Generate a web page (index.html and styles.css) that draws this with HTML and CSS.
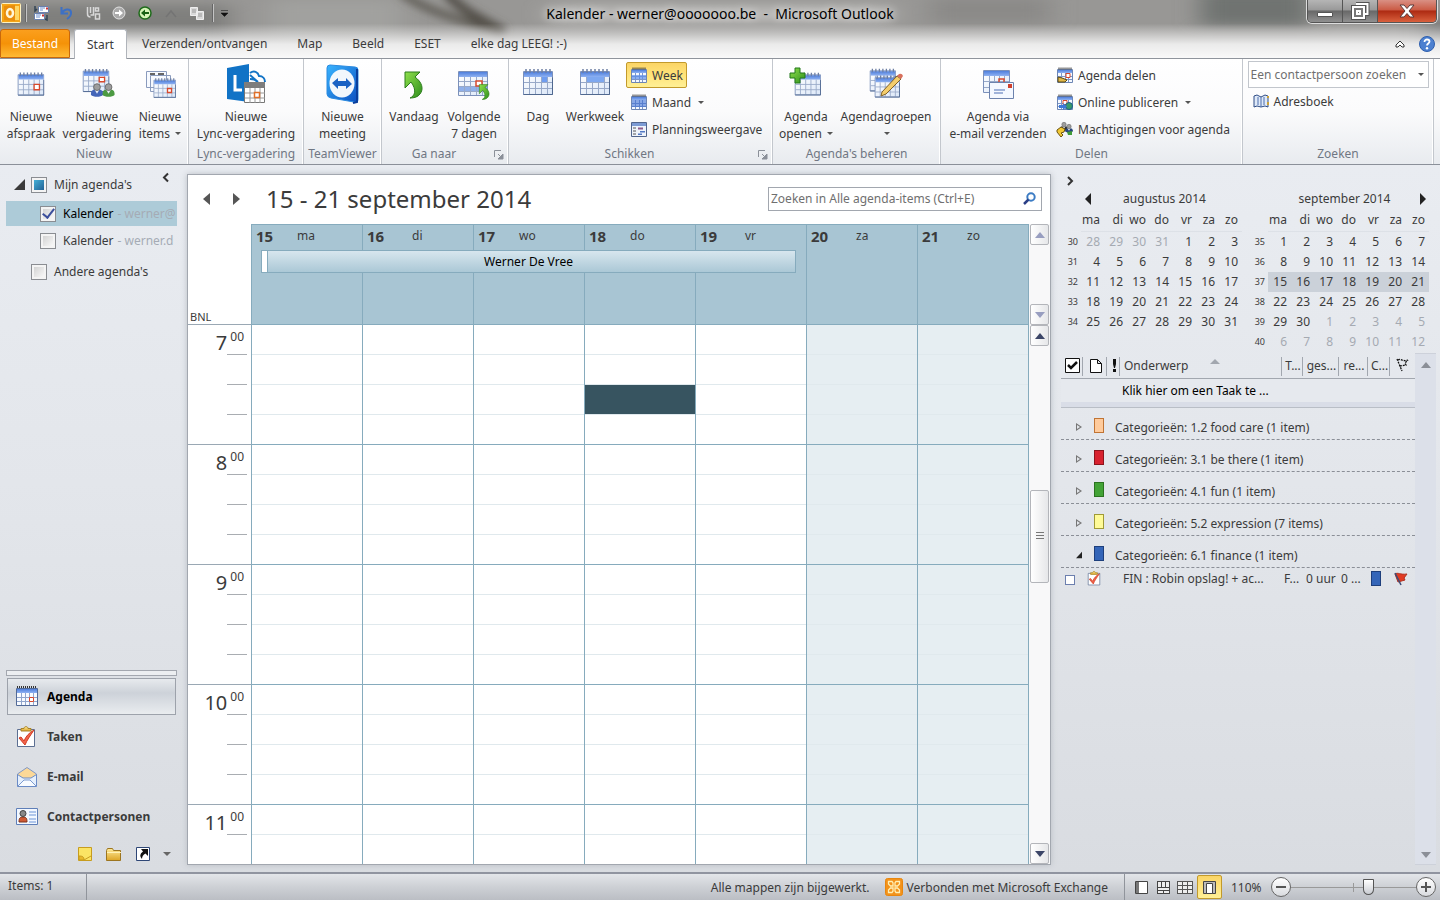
FILE: index.html
```html
<!DOCTYPE html>
<html lang="nl">
<head>
<meta charset="utf-8">
<title>Kalender - Microsoft Outlook</title>
<link rel="stylesheet" href="styles.css">
</head>
<body>
<svg class="defs" aria-hidden="true">
  <defs>
    <linearGradient id="gBlue" x2="0" y2="1"><stop offset="0" stop-color="#4f7fdc"/><stop offset="1" stop-color="#8fb2f2"/></linearGradient>
    <linearGradient id="gPaper" x2="1" y2="1"><stop offset="0" stop-color="#fff"/><stop offset="1" stop-color="#dbe7f8"/></linearGradient>
    <linearGradient id="gGreen" x2="1" y2="1"><stop offset="0" stop-color="#8fe04c"/><stop offset="1" stop-color="#2f8f1c"/></linearGradient>
    <linearGradient id="gTv" x2="1" y2="1"><stop offset="0" stop-color="#39b4ff"/><stop offset="1" stop-color="#0a4fc0"/></linearGradient>
    <linearGradient id="gGold" x2="0" y2="1"><stop offset="0" stop-color="#ffeb9a"/><stop offset="1" stop-color="#dda526"/></linearGradient>
  </defs>
  <symbol id="cal" viewBox="0 0 32 32">
    <path d="M2.500 5.500h29v23h-29z" fill="url(#gPaper)" stroke="#7b90ba"/>
    <path d="M3 6h28v5H3z" fill="url(#gBlue)"/>
    <path d="M3 16.500h28M3 22.500h28M8.500 11v17M14.500 11v17M20.500 11v17M26.500 11v17" stroke="#98a9c8" fill="none"/>
    <path d="M2.500 28.500h29v-17" stroke="#50688f" fill="none"/>
    <path d="M5 3v4M9 3v4M13 3v4M17 3v4M21 3v4M25 3v4M29 3v4" stroke="#6d7fa4" stroke-width="1.500"/>
  </symbol>
  <symbol id="cal16" viewBox="0 0 16 16">
    <path d="M.5 2.500h15v13H.5z" fill="#f5f9ff" stroke="#6d86b4"/>
    <path d="M1 3h14v3H1z" fill="url(#gBlue)"/>
    <path d="M1 9.500h14M1 12.500h14M4.500 6v9M8.500 6v9M11.500 6v9" stroke="#7d97c8" fill="none"/>
    <path d="M2 .5v2M4 .5v2M6 .5v2M8 .5v2M10 .5v2M12 .5v2M14 .5v2" stroke="#333"/>
  </symbol>
  <symbol id="curl" viewBox="0 0 20 28">
    <path d="M1 1h15l-5 5c7 5 9 12 5 17-2 3-6 4-10 4 5-2 7-8 1-16l-6 6z" fill="url(#gGreen)" stroke="#2c7d1c"/>
  </symbol>
  <symbol id="task" viewBox="0 0 20 22">
    <path d="M1.500 3.500h17v17h-17z" fill="#fff" stroke="#5c6f92"/>
    <path d="M5 5V2.500h3C8 0 12 0 12 2.500h3V5z" fill="url(#gGold)" stroke="#a7822a"/>
    <path d="M3 12l2-1 3 4c2-5 5-8 10-11-4 6-7 10-9 15z" fill="#f0644c" stroke="#d23a22"/>
  </symbol>
  <symbol id="person" viewBox="0 0 14 16">
    <path d="M0 13c0-4 2-6 7-6s7 2 7 6c-3 3-11 3-14 0z"/>
    <path d="M4 7h6l-3 5z" fill="#e8eef8"/>
    <circle cx="7" cy="4.500" r="3.800" fill="#9d9d9d" stroke="#666"/>
  </symbol>
  <symbol id="launch" viewBox="0 0 10 10">
    <path d="M.5 7V.5H7" fill="none" stroke="#8b9099"/><path d="M4 4l4 4M9 4v5H4z" fill="#8b9099" stroke="#8b9099"/>
  </symbol>
  <symbol id="exch" viewBox="0 0 18 18">
    <rect x=".5" y=".5" width="17" height="17" rx="2" fill="#f3921a" stroke="#e8860e"/>
    <path d="M3.500 3.500h3.500l1 1.500v3H5.500l-2-2zM14.500 3.500H11L10 5v3h2.500l2-2zM3.500 14.500h3.500l1-1.500v-3H5.500l-2 2zM14.500 14.500H11L10 13v-3h2.500l2 2z" fill="none" stroke="#fff0b4" stroke-width="1.300"/>
  </symbol>
</svg>

<div class="window">
  <header class="chrome">
    <svg class="backdrop" viewBox="0 0 1440 58" preserveAspectRatio="none" aria-hidden="true">
      <defs>
        <filter id="soft" filterUnits="userSpaceOnUse" x="-60" y="-60" width="1560" height="180"><feGaussianBlur stdDeviation="12 6"/></filter>
        <filter id="twig" filterUnits="userSpaceOnUse" x="380" y="-40" width="180" height="120"><feGaussianBlur stdDeviation="4"/></filter>
        <linearGradient id="fade" x2="0" y2="1"><stop offset=".4" stop-color="#fafafa" stop-opacity="0"/><stop offset=".75" stop-color="#f6f6f6" stop-opacity=".88"/><stop offset="1" stop-color="#fafafa"/></linearGradient>
      </defs>
      <rect width="1440" height="58" fill="#989795"/>
      <g filter="url(#soft)" fill="none">
        <path d="M-20 22h250" stroke="#7f7f7d" stroke-width="34"/>
        <path d="M270 20h130" stroke="#a1a19f" stroke-width="40"/>
        <path d="M550 14h340" stroke="#bcbbb9" stroke-width="16"/>
        <path d="M930 10h120" stroke="#8b8a88" stroke-width="26"/>
        <path d="M1200 8h110" stroke="#707371" stroke-width="34"/>
        <path d="M1425 36h40" stroke="#777" stroke-width="34"/>
      </g>
      <g filter="url(#twig)" fill="none">
        <path d="M445-8c20 22 40 28 60 40" stroke="#4f4c45" stroke-width="9"/>
        <path d="M400-8c30 22 60 26 100 40" stroke="#5a5750" stroke-width="7"/>
      </g>
      <rect width="1440" height="58" fill="url(#fade)"/>
    </svg>
    <div class="titlebar">
      <div class="quick">
        <svg width="20" height="20" viewBox="0 0 20 20"><rect x=".5" y=".5" width="19" height="19" rx="1" fill="#f5a517" stroke="#fff2c0"/><path d="M12 3h6v14h-6z" fill="#ffd765"/><path d="M3 3l11-1v16L3 17z" fill="#e98d0c"/><ellipse cx="9" cy="10" rx="3" ry="4" fill="none" stroke="#fff6d8" stroke-width="2.500"/></svg>
        <i class="sep"></i>
        <button class="qb" aria-label="Verzenden/ontvangen"><svg width="17" height="17" viewBox="0 0 17 17"><path d="M5.500 1.500h10v6h-10zM1.500 8.500h10v6h-10z" fill="#fff" stroke="#6a80ac"/><path d="M7 3h5M7 5h3M3 10h5M3 12h4" stroke="#6a8fd0"/><path d="M13 2.500h2v2h-2zM9 9.500h2v2H9z" fill="#c33"/><path d="M2 1v5l2-2M14 10v5l-2-1" fill="none" stroke="#345" stroke-width="1.500"/></svg></button>
        <button class="qb" aria-label="Ongedaan maken"><svg width="14" height="14" viewBox="0 0 14 14"><path d="M1.500 1v6.500H8M2 7c2-4 8-5 9-1 .5 3-1 5-4 7" fill="none" stroke="#3d70c4" stroke-width="2"/></svg></button>
        <button class="qb" aria-label="Afdrukken"><svg width="15" height="15" viewBox="0 0 15 15" fill="none" stroke="#d8d8d8"><path d="M1.500 1v7q0 3 3 3M4.500 1v6M7.500 1v8h-3M9.500 2h3v3h-3zM9.500 8h4v5h-4z" stroke-width="1.500"/></svg></button>
        <button class="qb" aria-label="Vooruit"><svg width="14" height="14" viewBox="0 0 14 14"><circle cx="7" cy="7" r="6" fill="#aaa" stroke="#e2e2e2"/><path d="M3 6h4V3.500L11 7l-4 3.500V8H3z" fill="#fff"/></svg></button>
        <button class="qb" aria-label="Terug"><svg width="14" height="14" viewBox="0 0 14 14"><circle cx="7" cy="7" r="6" fill="#d6f5b8" stroke="#1f6b1b" stroke-width="1.500"/><path d="M11 6H7V3.500L3 7l4 3.500V8h4z" fill="#186014"/></svg></button>
        <button class="qb" aria-label="Omhoog"><svg width="12" height="9" viewBox="0 0 12 9"><path d="M1 8l5-6 5 6" fill="none" stroke="#747474" stroke-width="1.500"/></svg></button>
        <button class="qb" aria-label="Kopiëren"><svg width="14" height="13" viewBox="0 0 14 13"><path d="M.5.5h7v8h-7zM6.500 4.500h7v8h-7z" fill="#d9d9d9" stroke="#eee"/><path d="M2 3h4M2 5h4M8 7h4M8 9h4" stroke="#999"/></svg></button>
        <i class="sep"></i>
        <button class="qb qb-more" aria-label="Meer"><svg width="7" height="7" viewBox="0 0 7 7"><path d="M0 .5h7M0 3h7L3.500 6.500z" fill="#111" stroke="#111" stroke-width=".5"/></svg></button>
      </div>
      <h1 class="wintitle">Kalender - werner@ooooooo.be&nbsp; -&nbsp; Microsoft Outlook</h1>
      <div class="winbtns">
        <button class="wb" aria-label="Minimaliseren"><svg width="18" height="14" viewBox="0 0 18 14"><path d="M1.500 8.500h15v4h-15z" fill="#fff" stroke="#555"/></svg></button>
        <button class="wb" aria-label="Verkleinen"><svg width="18" height="18" viewBox="0 0 18 18"><path d="M5 1.500h12v11h-3M1.500 4.500h12v12h-12z" fill="#777" stroke="#555" stroke-width="3"/><path d="M5 2h11.500v10H14M2 5h11v11H2zM6 9h3v3H6z" fill="none" stroke="#fff" stroke-width="2"/></svg></button>
        <button class="wb wb-close" aria-label="Sluiten"><svg width="16" height="14" viewBox="0 0 16 14"><path d="M1 1h4l3 3.500L11 1h4l-5 6 5 6h-4L8 9.500 5 13H1l5-6z" fill="#fff" stroke="#5a3a3a"/></svg></button>
      </div>
    </div>
    <nav class="tabs">
      <button class="tab tab-file">Bestand</button>
      <button class="tab tab-on">Start</button>
      <button class="tab">Verzenden/ontvangen</button>
      <button class="tab">Map</button>
      <button class="tab">Beeld</button>
      <button class="tab">ESET</button>
      <button class="tab">elke dag LEEG! :-)</button>
      <div class="tabend">
        <svg width="10" height="8" viewBox="0 0 10 8"><path d="M1 5l4-4 4 4v2H7L5 5 3 7H1z" fill="#fff" stroke="#333"/></svg>
        <svg width="16" height="16" viewBox="0 0 16 16"><circle cx="8" cy="8" r="7.500" fill="#4c80d0" stroke="#2e5fae"/><path d="M5.500 6c0-3.500 5-3 5-.4 0 1.900-2.500 2-2.500 4" fill="none" stroke="#fff" stroke-width="1.800"/><circle cx="8" cy="12.200" r="1.200" fill="#fff"/></svg>
      </div>
    </nav>
  </header>

  <section class="ribbon">
    <div class="group g-nieuw">
      <div class="tools">
        <button class="big w62"><svg class="ic" viewBox="-1 -2 36 36"><use href="#cal" width="32" height="32"/><path d="M20.500 16.500h6v6h-6z" fill="#fff" stroke="#d8492c" stroke-width="1.500"/></svg><span>Nieuwe<br>afspraak</span></button>
        <button class="big w70"><svg class="ic" viewBox="0 2 36 36"><use href="#cal" width="32" height="32"/><path d="M20.500 12.500h6v5h-6z" fill="#fff" stroke="#d8492c" stroke-width="1.500"/><use href="#person" x="11" y="19" width="14" height="16" fill="#4465b8"/><use href="#person" x="24" y="19" width="14" height="16" fill="#4c9a42"/></svg><span>Nieuwe<br>vergadering</span></button>
        <button class="big w56"><svg class="ic" viewBox="0 0 32 32"><path d="M2.500 3.500h20v16h-20zM6.500 7.500h20v16h-20z" fill="#f7faff" stroke="#8a9bbd"/><path d="M6 6h5M14 6h6" stroke="#666" stroke-width="2"/><use href="#cal" x="8" y="8" width="24" height="24"/><path d="M23.500 20.500h4v4h-4z" fill="#fff" stroke="#d8492c" stroke-width="1.300"/></svg><span>Nieuwe<br>items <i class="dn"></i></span></button>
      </div>
      <div class="glabel">Nieuw</div>
    </div>
    <div class="group g-lync">
      <div class="tools">
        <button class="big w108"><svg class="ic ic40" viewBox="0 0 40 40"><path d="M1 4l22-4v38L1 35z" fill="#1173c6"/><path d="M9 11v15h7" fill="none" stroke="#fff" stroke-width="3"/><path d="M24 9c4-3 8-1 9 3 4 0 6 3 6 6M24 15c3 0 6 1 7 3M24 11l8 7" fill="none" stroke="#1173c6" stroke-width="2"/><path d="M18.500 18.500h20v20h-20z" fill="#fff" stroke="#777"/><path d="M18 18h21v6H18z" fill="#7d7d7d"/><path d="M19 29h20M19 34h20M24 24v15M29 24v15M34 24v15" stroke="#999"/><path d="M28.500 28.500h5v5h-5z" fill="#fff" stroke="#e0702a" stroke-width="1.500"/></svg><span>Nieuwe<br>Lync-vergadering</span></button>
      </div>
      <div class="glabel">Lync-vergadering</div>
    </div>
    <div class="group g-tv">
      <div class="tools">
        <button class="big w70"><svg class="ic ic40" viewBox="0 0 40 40"><path d="M4 4q0-3 3-3l25 2q3 0 3 3v29q0 4-4 3L8 34q-4-1-4-4z" fill="url(#gTv)" stroke="#2b8be0"/><path d="M34 5v33l-4 1" fill="none" stroke="#0a3f9c" stroke-width="2"/><ellipse cx="19" cy="19.500" rx="12.500" ry="14" fill="#f2f7fc"/><path d="M9 19l6-5v3h8v-3l6 6-6 5v-3h-8v3z" fill="#1a62c4"/></svg><span>Nieuwe<br>meeting</span></button>
      </div>
      <div class="glabel">TeamViewer</div>
    </div>
    <div class="group g-ga">
      <div class="tools">
        <button class="big w60"><svg class="ic"><use href="#curl" x="6" y="3" width="20" height="28"/></svg><span>Vandaag</span></button>
        <button class="big w60"><svg class="ic" viewBox="0 0 32 32"><path d="M.5 3.500h29v24H.5z" fill="url(#gPaper)" stroke="#7b90ba"/><path d="M1 4h28v5H1z" fill="url(#gBlue)"/><path d="M1 18h28v5H1z" fill="#8fb0ea"/><path d="M1 13.500h28M1 18.500h28M1 23.500h28M6.500 9v18M12.500 9v18M18.500 9v18M24.500 9v18" stroke="#98a9c8"/><path d="M18 13h6v5h-6z" fill="#fff" stroke="#d8492c" stroke-width="1.500"/><use href="#curl" x="20" y="16" width="13" height="16"/></svg><span>Volgende<br>7 dagen</span></button>
      </div>
      <div class="glabel glabel-l">Ga naar<svg class="launch"><use href="#launch"/></svg></div>
    </div>
    <div class="group g-schik">
      <div class="tools">
        <button class="big w52"><svg class="ic" viewBox="1 2 32 32"><use href="#cal" width="32" height="32"/><path d="M21 11h5v5h-5z" fill="#6f9df0"/></svg><span>Dag</span></button>
        <button class="big w62"><svg class="ic" viewBox="1 2 32 32"><use href="#cal" width="32" height="32"/><path d="M9 11h17v5H9z" fill="#7ea8f0"/></svg><span>Werkweek</span></button>
        <div class="stack">
          <button class="small small-on"><svg class="ic16"><use href="#cal16"/><path d="M1 8h14v4H1z" fill="#5f90ea" opacity=".7"/></svg>Week</button>
          <button class="small"><svg class="ic16"><use href="#cal16"/><path d="M1 6h14v7H1z" fill="#3f70d4" opacity=".6"/></svg>Maand <i class="dn"></i></button>
          <button class="small"><svg class="ic16"><path d="M.5 1.500h15v14H.5z" fill="#eef3fb" stroke="#51658c"/><path d="M1 2h14v3H1z" fill="#7c9bd4"/><path d="M2 7h3M2 10h3M2 13h3" stroke="#555"/><path d="M7 6.500h5v2H7z" fill="#8d5a8a"/><path d="M9 10h5v1.500H9zM7 12.500h4V14H7z" fill="#5279c4"/></svg>Planningsweergave</button>
        </div>
      </div>
      <div class="glabel glabel-l">Schikken<svg class="launch"><use href="#launch"/></svg></div>
    </div>
    <div class="group g-beheer">
      <div class="tools">
        <button class="big w62"><svg class="ic" viewBox="0 0 32 32"><use href="#cal" x="3" y="2" width="28" height="28"/><path d="M5 0h5v5h5v5h-5v5H5v-5H0V5h5z" fill="url(#gGreen)" stroke="#23791a"/></svg><span>Agenda<br>openen <i class="dn"></i></span></button>
        <button class="big w98"><svg class="ic" viewBox="0 0 32 32"><use href="#cal" x="-2" y="-2" width="28" height="28"/><use href="#cal" x="3" y="5" width="27" height="27"/><path d="M11 28l1-4L27 8l4 3-15 15z" fill="#f4cd6c" stroke="#80622a"/><path d="M27 8l2-2q3-1 4 2l-2 3z" fill="#d8705c"/></svg><span>Agendagroepen<br><i class="dn"></i></span></button>
      </div>
      <div class="glabel">Agenda's beheren</div>
    </div>
    <div class="group g-delen">
      <div class="tools">
        <button class="big w108"><svg class="ic" viewBox="0 0 32 32"><path d="M1.500 2.500h26v22h-26z" fill="url(#gPaper)" stroke="#7b90ba"/><path d="M2 3h25v5H2z" fill="url(#gBlue)"/><path d="M2 13.500h25M2 19.500h25M7.500 8v16M12.500 8v16M17.500 8v16M22.500 8v16" stroke="#98a9c8"/><path d="M17 14v-3h5v3" fill="none" stroke="#d8492c" stroke-width="1.500"/><path d="M7.500 14.500h24v16h-24z" fill="#f4f8ff" stroke="#6c82ad"/><path d="M12 22h11M12 25h9" stroke="#4d6fb4"/><path d="M26 16h4v4h-4z" fill="#d0402c"/></svg><span>Agenda via<br>e-mail verzenden</span></button>
        <div class="stack">
          <button class="small"><svg class="ic16"><use href="#cal16"/><path d="M9 6.500h4v4H9z" fill="#fff" stroke="#d8492c"/><path d="M1 10l4 1 5 2-2 2H1z" fill="#e0b748" stroke="#5c4a12"/></svg>Agenda delen</button>
          <button class="small"><svg class="ic16"><use href="#cal16"/><path d="M6 6.500h4v4H6z" fill="#fff" stroke="#d8492c"/><circle cx="12" cy="12" r="3.500" fill="#3a9a6a" stroke="#1b5f8c"/><path d="M2 11h4V9l4 3.500L6 16v-2H2z" fill="#3c78d8"/></svg>Online publiceren <i class="dn"></i></button>
          <button class="small"><svg class="ic16" viewBox="0 0 16 16"><use href="#person" x="3" y="0" width="8" height="11" fill="#333"/><use href="#person" x="8" y="1" width="8" height="13" fill="#27447c"/><path d="M10 11l5-1v4h-4z" fill="#3f9a38"/><path d="M0 9l4-3 4 2-1 3-3 1 2 2-2 2-4-5z" fill="#f2c834" stroke="#6b5310"/></svg>Machtigingen voor agenda</button>
        </div>
      </div>
      <div class="glabel">Delen</div>
    </div>
    <div class="group g-zoek">
      <div class="tools">
        <div class="find">
          <label class="combo"><input class="combo-in" type="text" placeholder="Een contactpersoon zoeken" aria-label="Een contactpersoon zoeken"><i class="dn"></i></label>
          <button class="small"><svg class="ic16" viewBox="0 0 16 16"><path d="M1 3l3-1 4 2 4-2 3 1v11l-3-1-4 1-4-1-3 1z" fill="#dfe9f8" stroke="#2f4d86"/><path d="M8 4v10M5 4v8M11 4v8" stroke="#4c6fae"/><path d="M14 3h2v2h-2zM14 9h2v3h-2z" fill="#caa23a"/></svg>Adresboek</button>
        </div>
      </div>
      <div class="glabel">Zoeken</div>
    </div>
  </section>

  <main class="work">
    <aside class="side">
      <div class="tree">
        <div class="row row-top"><i class="open"></i><i class="box box-mixed"></i>Mijn agenda's<svg class="collapse" width="7" height="9" viewBox="0 0 7 9"><path d="M6 .5l-4 4 4 4" fill="none" stroke="#333" stroke-width="2"/></svg></div>
        <label class="row row-sub row-on"><input class="box" type="checkbox" checked>Kalender<span class="dim">- werner@</span></label>
        <label class="row row-sub"><input class="box" type="checkbox">Kalender<span class="dim">- werner.d</span></label>
        <label class="row row-other"><input class="box" type="checkbox">Andere agenda's</label>
      </div>
      <div class="modules">
        <div class="splitter"></div>
        <button class="mod mod-on"><svg width="24" height="22" viewBox="0 0 24 22"><path d="M1.500 2.500h21v17h-21z" fill="#f8fbff" stroke="#526a97"/><path d="M2 3h20v4H2z" fill="url(#gBlue)"/><path d="M2 11.500h20M2 15.500h20M6.500 7v12M10.500 7v12M14.500 7v12M18.500 7v12" stroke="#90a5cc"/><path d="M2 1h20" stroke="#333" stroke-width="2" stroke-dasharray="1 1"/><path d="M14.500 11.500h4v4h-4z" fill="#fff" stroke="#d8492c"/></svg>Agenda</button>
        <button class="mod"><svg width="24" height="22"><use href="#task" x="1" width="20" height="22"/></svg>Taken</button>
        <button class="mod"><svg width="24" height="22" viewBox="0 0 24 22"><path d="M2.500 8L12 1.500 21.500 8v12h-19z" fill="#fbd898" stroke="#7f98c8"/><path d="M2.500 8.500L8 12h8l5.500-3.500v12h-19z" fill="#e6f0fd" stroke="#6a8bc6"/><path d="M3 20l6-6h6l6 6" fill="#f8fbff" stroke="#7c9bd0"/></svg>E-mail</button>
        <button class="mod"><svg width="24" height="20" viewBox="0 0 24 20"><path d="M1.500 1.500h21v16h-21z" fill="#f3f8ff" stroke="#5f7fb8"/><path d="M4 15c0-4 1-5 4-5s4 1 4 5z" fill="#cf5a34" stroke="#7c3018"/><circle cx="8" cy="6.500" r="3" fill="#888" stroke="#444"/><path d="M14 5h7M14 8h7M14 12h7M14 15h7" stroke="#6d95d8"/></svg>Contactpersonen</button>
        <div class="shortcuts">
          <button class="qb" aria-label="Notities"><svg width="14" height="14" viewBox="0 0 14 14"><path d="M.5.500h13v13H.5z" fill="#fbe464" stroke="#c79c1f"/><path d="M1 9c4 0 5 1 5 4H1zM6 13l7-4" fill="#e8b82c" stroke="#c79c1f"/></svg></button>
          <button class="qb" aria-label="Mappenlijst"><svg width="16" height="13" viewBox="0 0 16 13"><path d="M.5 2.500l1-2h5l1 2h7v10H.5z" fill="url(#gGold)" stroke="#9c7520"/><path d="M1 4.500h14" stroke="#fff2b8"/></svg></button>
          <button class="qb" aria-label="Snelkoppelingen"><svg width="14" height="14" viewBox="0 0 14 14"><path d="M.5.500h13v13H.5z" fill="#fff" stroke="#2e4676"/><path d="M5 2h7v7L9.500 6.500Q6 8 6 12 2 8 7 4.500z" fill="#111"/></svg></button>
          <button class="qb" aria-label="Configureren"><i class="dn dn-lg"></i></button>
        </div>
      </div>
    </aside>

    <section class="cal">
      <div class="calhead">
        <button class="tri tri-l" aria-label="Vorige week"></button>
        <button class="tri tri-r" aria-label="Volgende week"></button>
        <h2 class="range">15 - 21 september 2014</h2>
        <label class="search"><input class="search-in" type="text" placeholder="Zoeken in Alle agenda-items (Ctrl+E)" aria-label="Zoeken in Alle agenda-items"><svg width="13" height="13" viewBox="0 0 13 13"><circle cx="8" cy="5" r="3.700" fill="none" stroke="#3c7cc4" stroke-width="2"/><path d="M5.500 7.500L1 12" stroke="#2b3f86" stroke-width="2.500"/></svg></label>
      </div>
      <div class="week">
        <div class="zone">BNL</div>
        <div class="days">
          <div class="day d1"><b>15</b><span>ma</span></div>
          <div class="day d2"><b>16</b><span>di</span></div>
          <div class="day d3"><b>17</b><span>wo</span></div>
          <div class="day d4"><b>18</b><span>do</span></div>
          <div class="day d5"><b>19</b><span>vr</span></div>
          <div class="day d6"><b>20</b><span>za</span></div>
          <div class="day d7"><b>21</b><span>zo</span></div>
          <button class="event">Werner De Vree</button>
        </div>
        <div class="scroll"><button class="sb sb-dim up" aria-label="Omhoog"></button><button class="sb sb-dim down" aria-label="Omlaag"></button></div>
      </div>
      <div class="grid">
        <div class="hours">
          <div class="hour">7<sup>00</sup></div>
          <div class="hour">8<sup>00</sup></div>
          <div class="hour">9<sup>00</sup></div>
          <div class="hour">10<sup>00</sup></div>
          <div class="hour">11<sup>00</sup></div>
        </div>
        <div class="col"></div><div class="col"></div><div class="col"></div>
        <div class="col"><div class="picked"></div></div>
        <div class="col"></div><div class="col col-off"></div><div class="col col-off"></div>
        <div class="scroll scroll-main"><button class="sb up" aria-label="Omhoog"></button><div class="thumb"><i></i></div><button class="sb down" aria-label="Omlaag"></button></div>
      </div>
    </section>

    <aside class="todo">
      <svg class="expand" width="7" height="10" viewBox="0 0 7 10"><path d="M1 1l4 4-4 4" fill="none" stroke="#333" stroke-width="2"/></svg>
      <div class="months">
        <table class="mini" id="m1"><caption><button class="tri tri-l dark" aria-label="Vorige maand"></button>augustus 2014</caption></table>
        <table class="mini" id="m2"><caption>september 2014<button class="tri tri-r dark" aria-label="Volgende maand"></button></caption></table>
      </div>
      <div class="taskpane">
        <div class="tasks">
          <table class="list">
            <colgroup><col class="c22"><col class="c24"><col class="c13"><col><col class="c21"><col class="c36"><col class="c29"><col class="c22"><col class="c25"></colgroup>
            <thead>
              <tr>
                <th><svg width="15" height="15" viewBox="0 0 15 15"><path d="M.5.500h14v14H.5z" fill="#fff" stroke="#111"/><path d="M3 7l3 3 6-6" fill="none" stroke="#111" stroke-width="2.500"/></svg></th>
                <th><svg width="12" height="14" viewBox="0 0 12 14"><path d="M.5.500h7l4 4v9H.5zM7.500.5v4h4" fill="#fff" stroke="#111"/></svg></th>
                <th><svg width="3" height="13" viewBox="0 0 3 13"><path d="M0 0h3v5L2 9H1L0 5zM0 10h3v3H0z" fill="#111"/></svg></th>
                <th class="tl">Onderwerp<i class="asc"></i></th>
                <th>T...</th><th>ges...</th><th>re...</th><th>C...</th>
                <th><svg width="14" height="15" viewBox="0 0 14 15"><path d="M1 1l5 12M2 2c3-2 4 2 10 0L9 5l1 2-6 1" fill="none" stroke="#111" stroke-width="1.300" stroke-dasharray="2 1"/></svg></th>
              </tr>
            </thead>
            <tbody>
              <tr class="new"><td colspan="3"></td><td colspan="6">Klik hier om een Taak te ...</td></tr>
            </tbody>
          </table>
          <div class="cat"><i class="fold"></i><i class="sw sw-orange"></i>Categorieën: 1.2 food care (1 item)</div>
          <div class="cat"><i class="fold"></i><i class="sw sw-red"></i>Categorieën: 3.1 be there (1 item)</div>
          <div class="cat"><i class="fold"></i><i class="sw sw-green"></i>Categorieën: 4.1 fun (1 item)</div>
          <div class="cat"><i class="fold"></i><i class="sw sw-yellow"></i>Categorieën: 5.2 expression (7 items)</div>
          <div class="cat"><i class="fold fold-open"></i><i class="sw sw-blue"></i>Categorieën: 6.1 finance (1 item)</div>
          <div class="item">
            <input class="tick" type="checkbox" aria-label="FIN : Robin opslag">
            <svg width="14" height="15"><use href="#task" width="14" height="15"/></svg>
            <span class="subject">FIN : Robin opslag! + ac...</span><span class="cf">F...</span><span class="cg">0 uur</span><span class="cr">0 ...</span>
            <i class="sw sw-blue"></i>
            <svg class="flag" width="14" height="14" viewBox="0 0 14 14"><path d="M1 2c3-2 5 1 12 0l-3 4 1 2-7 2z" fill="#e23a22" stroke="#b03020"/><path d="M1 1l6 12" stroke="#3d4d78" stroke-width="1.500"/></svg>
          </div>
        </div>
        <div class="taskscroll"><i class="up"></i><i class="down"></i></div>
      </div>
    </aside>
  </main>

  <footer class="status">
    <span class="count">Items: 1</span>
    <span class="sync">Alle mappen zijn bijgewerkt.</span>
    <span class="conn"><svg width="18" height="18"><use href="#exch"/></svg>Verbonden met Microsoft Exchange</span>
    <div class="views">
      <button class="vb" aria-label="Normaal"><svg width="13" height="13" viewBox="0 0 13 13"><path d="M.5.500h12v12H.5z" fill="#fff" stroke="#444"/><path d="M1 1h3v11H1z" fill="#777"/></svg></button>
      <button class="vb" aria-label="Agenda en taken"><svg width="13" height="13" viewBox="0 0 13 13"><path d="M0 0h13v13H0z" fill="#444"/><path d="M1 1h3v5H1zM5 1h3v5H5zM9 1h3v5H9zM1 7h11v2H1zM1 10h5v2H1zM7 10h5v2H7z" fill="#eee"/></svg></button>
      <button class="vb" aria-label="Klassiek"><svg width="16" height="13" viewBox="0 0 16 13"><path d="M0 0h16v13H0z" fill="#555"/><path d="M1 1h4v3H1zM6 1h4v3H6zM11 1h4v3h-4zM1 5h4v3H1zM6 5h4v3H6zM11 5h4v3h-4zM1 9h4v3H1zM6 9h4v3H6zM11 9h4v3h-4z" fill="#eee"/></svg></button>
      <button class="vb vb-on" aria-label="Lezen"><svg width="13" height="13" viewBox="0 0 13 13"><path d="M.5.500h12v12H.5z" fill="#bbb" stroke="#444"/><path d="M3.500 2.500h6v10h-6z" fill="#fff" stroke="#444"/></svg></button>
    </div>
    <span class="pct">110%</span>
    <button class="zoombtn" aria-label="Uitzoomen"><svg width="10" height="10" viewBox="0 0 10 10"><path d="M0 4h10v2H0z" fill="#555"/></svg></button>
    <input class="zoom" type="range" min="0" max="100" value="63" aria-label="Zoomen">
    <button class="zoombtn" aria-label="Inzoomen"><svg width="10" height="10" viewBox="0 0 10 10"><path d="M0 4h4V0h2v4h4v2H6v4H4V6H0z" fill="#555"/></svg></button>
  </footer>
</div>
<script src="months.js"></script>
</body>
</html>
```
FILE: months.js
```javascript
// Fills a mini month table with week numbers and day cells.
function fillMonth(id, firstWeek, weeks, lead, prevLast, length, picked) {
  const table = document.getElementById(id);
  const names = ['ma', 'di', 'wo', 'do', 'vr', 'za', 'zo'];
  let html = '<thead><tr><th></th>' + names.map(n => `<th>${n}</th>`).join('') + '</tr></thead><tbody>';
  for (let w = 0; w < weeks; w++) {
    const week = firstWeek + w;
    html += `<tr class="${week === picked ? 'wk-on' : ''}"><th>${week}</th>`;
    for (let d = 0; d < 7; d++) {
      const n = w * 7 + d - lead + 1;
      if (n < 1) html += `<td class="out">${prevLast + n}</td>`;
      else if (n > length) html += `<td class="out">${n - length}</td>`;
      else html += `<td>${n}</td>`;
    }
    html += '</tr>';
  }
  table.insertAdjacentHTML('beforeend', html + '</tbody>');
}
fillMonth('m1', 30, 5, 4, 31, 31, 0);
fillMonth('m2', 35, 6, 0, 31, 30, 37);
```
FILE: styles.css
```css
* { box-sizing: border-box; }
body { margin: 0; font: 12px/17px "Noto Sans", "Open Sans", sans-serif; color: #3b3b3b; }
button, input { font: inherit; color: inherit; }
button { margin: 0; padding: 0; border: 0; background: none; white-space: nowrap; }
h1, h2 { margin: 0; font-weight: 400; }
svg { display: block; flex: none; overflow: visible; }
i { display: inline-block; flex: none; font-style: normal; }
.defs { position: absolute; width: 0; height: 0; }
.window { display: flex; flex-direction: column; height: 100vh; background: #e4e7ec; overflow: hidden; }

/* title bar and tabs */
.chrome { position: relative; flex: none; background: #999; }
.backdrop { position: absolute; inset: 0; width: 100%; height: 100%; overflow: hidden; }
.titlebar { position: relative; display: grid; grid-template-columns: 1fr auto 1fr; align-items: start; height: 29px; }
.quick { display: flex; align-items: center; gap: 4px; height: 26px; padding-left: 1px; }
.qb { display: flex; align-items: center; justify-content: center; width: 22px; height: 22px; }
.qb-more { width: 14px; }
.sep { width: 1px; height: 18px; background: #666; box-shadow: 1px 0 #c4c4c4; }
.wintitle { padding-top: 4px; font-size: 14px; line-height: 20px; color: #000; white-space: pre; text-shadow: 0 0 8px #fff; }
.winbtns { display: flex; justify-self: end; margin-right: 3px; height: 23px; border: 1px solid #555; border-top: 0; border-radius: 0 0 5px 5px; box-shadow: 0 0 0 1px #ddd; overflow: hidden; }
.wb { display: flex; align-items: center; justify-content: center; width: 35px; border-right: 1px solid #555; background: linear-gradient(#b5b5b5, #999 45%, #686868 50%, #909090); }
.wb-close { width: 58px; border-right: 0; background: linear-gradient(#d99084, #cb5b45 45%, #ad2a12 50%, #d9603d); }
.tabs { position: relative; display: flex; align-items: stretch; height: 30px; border-bottom: 1px solid #8f949c; }
.tab { padding: 0 16px 0 14px; }
.tab-file { width: 70px; margin-right: 4px; padding: 0; border: 1px solid #c9680a; border-radius: 3px 3px 0 0; background: linear-gradient(#fb9f1d, #f59208 50%, #ffba35); color: #fff; }
.tab-on { margin-bottom: -1px; margin-right: 1px; padding: 0 12px; border: 1px solid #b0b4ba; border-bottom: 0; border-radius: 3px 3px 0 0; background: #fff; }
.tabend { display: flex; align-items: center; gap: 14px; margin-left: auto; padding-right: 5px; }

/* ribbon */
.ribbon { display: flex; flex: none; height: 106px; border-bottom: 1px solid #8b9099; background: linear-gradient(#fff, #fbfbfc 50%, #e8ebef); }
.group { display: flex; flex-direction: column; border-right: 1px solid #c3c7cd; box-shadow: inset -1px 0 #fff; }
.g-nieuw { width: 189px; } .g-lync { width: 115px; } .g-tv { width: 78px; } .g-ga { width: 127px; }
.g-schik { width: 264px; } .g-beheer { width: 168px; } .g-delen { width: 302px; } .g-zoek { width: 191px; }
.tools { display: flex; height: 86px; }
.g-lync .tools, .g-tv .tools, .g-zoek .tools { justify-content: center; }
.g-ga .tools, .g-beheer .tools { padding-left: 2px; }
.g-schik .tools, .g-delen .tools { padding-left: 3px; }
.big { display: flex; flex-direction: column; align-items: center; gap: 8px; padding-top: 9px; line-height: 17px; }
.w52 { width: 52px; } .w56 { width: 56px; } .w60 { width: 60px; } .w62 { width: 62px; } .w70 { width: 70px; } .w98 { width: 98px; } .w108 { width: 108px; }
.ic { width: 32px; height: 32px; }
.ic40 { width: 40px; height: 40px; margin: -4px 0; }
.ic16 { width: 16px; height: 16px; }
.dn { border: 3px solid transparent; border-top-color: #555; border-bottom: 0; margin: 0 0 3px 2px; }
.dn-lg { border-width: 4px 4px 0; margin: 0; border-top-color: #666; }
.glabel { display: flex; justify-content: center; position: relative; color: #707783; line-height: 18px; }
.glabel-l { padding-right: 22px; }
.launch { position: absolute; right: 4px; top: 5px; width: 10px; height: 10px; }
.stack { display: flex; flex-direction: column; align-items: flex-start; gap: 1px; padding-top: 3px; }
.small { display: flex; align-items: center; gap: 5px; height: 26px; padding: 0 3px 0 4px; border: 1px solid transparent; border-radius: 2px; }
.small .dn { margin: 0 0 0 2px; }
.small-on { border-color: #c29a2c; background: linear-gradient(#fbd566, #ffe37a 50%, #fff096); }
.find { display: flex; flex-direction: column; align-items: flex-start; width: 181px; padding-top: 2px; }
.combo { display: flex; align-items: center; width: 100%; height: 27px; border: 1px solid #c2c6cc; background: #fff; }
.combo .dn { margin: 0 4px 0 0; }
.combo-in, .search-in { flex: 1; min-width: 0; padding: 0 2px; border: 0; background: none; }
.combo-in::placeholder, .search-in::placeholder { color: #6f6f6f; opacity: 1; }

/* work area */
.work { display: flex; flex: 1; min-height: 0; background: linear-gradient(#e9ecf1, #e3e6eb 45%, #d9dce1); }
.side { display: flex; flex-direction: column; justify-content: space-between; width: 187px; padding: 7px 10px 2px 6px; }
.row { display: flex; align-items: center; height: 25px; white-space: nowrap; overflow: hidden; }
.row-top { padding-left: 8px; position: relative; }
.collapse { position: absolute; right: 8px; top: 1px; }
.open { margin-right: 6px; border-left: 11px solid transparent; border-bottom: 11px solid #3a3a3a; }
.box { appearance: none; flex: none; display: grid; place-items: center; width: 16px; height: 16px; margin: 0 7px 0 0; border: 1px solid #8a8d92; background: linear-gradient(135deg, #ccc, #fff); box-shadow: inset 0 0 0 2px #f4f4f4; }
.box:checked::after { content: ""; width: 5px; height: 10px; margin-top: -3px; border: solid #3c4f9c; border-width: 0 2px 2px 0; transform: rotate(38deg); }
.box-mixed { background: linear-gradient(135deg, #4cc0e4, #1b5288); }
.row-sub { margin-top: 2px; padding-left: 34px; }
.row-on { margin-top: 4px; background: #adcbd8; color: #000; }
.row-other { margin-top: 6px; padding-left: 25px; }
.dim { margin-left: 4px; color: #a5abb5; }
.splitter { height: 6px; margin-bottom: 2px; border: 1px solid #a3a7af; background: #eceef1; }
.mod { display: flex; align-items: center; gap: 8px; width: 169px; height: 37px; margin: 0 1px 3px; padding-left: 7px; border: 1px solid transparent; font-weight: 700; }
.mod-on { border-color: #9da2ab; background: linear-gradient(#e7eaee, #cdd2d9 40%, #e9ecef); color: #000; }
.shortcuts { display: flex; justify-content: flex-end; gap: 7px; height: 32px; align-items: center; }
.shortcuts .qb:last-child { width: 12px; margin-right: 4px; }

/* week view */
.cal { display: flex; flex: 1; flex-direction: column; min-width: 0; margin: 9px 0 7px; border: 1px solid #a2a7af; background: #fff; box-shadow: 0 0 6px #b9bdc4; }
.calhead { display: flex; align-items: center; height: 49px; padding: 0 8px 2px 15px; }
.tri { width: 0; height: 0; border: 6px solid transparent; }
.tri-l { border-right: 7px solid #555; border-left: 0; }
.tri-r { border-left: 7px solid #555; border-right: 0; margin-left: 23px; }
.tri.dark { border-width: 6px 6px; border-left-color: transparent; }
.tri-l.dark { border-left-width: 0; border-right-color: #222; }
.tri.tri-r.dark { border-right-width: 0; border-left-color: #222; }
.tri.tri-l.dark { border-left-width: 0; }
.range { margin-left: 26px; font-size: 24px; line-height: 32px; }
.search { display: flex; align-items: center; width: 274px; height: 24px; margin-left: auto; padding-right: 5px; border: 1px solid #a2a7af; }
.week { display: grid; grid-template-columns: 63px minmax(0, 1fr) 22px; flex: none; height: 101px; }
.zone { align-self: end; padding: 0 2px; border-bottom: 1px solid #9aa8b4; font-size: 11px; line-height: 15px; }
.days { display: grid; grid-template-columns: repeat(7, minmax(0, 1fr)); grid-template-rows: 25px 23px 1fr; border: 1px solid #86abbd; border-width: 1px 0; background: #a8c5d3; }
.day { display: flex; grid-row: 1 / -1; padding-left: 4px; border-left: 1px solid #86abbd; }
.day b { width: 41px; font-size: 15px; line-height: 22px; }
.day span { line-height: 22px; }
.d1 { grid-column: 1; } .d2 { grid-column: 2; } .d3 { grid-column: 3; } .d4 { grid-column: 4; } .d5 { grid-column: 5; } .d6 { grid-column: 6; } .d7 { grid-column: 7; }
.day.d2, .day.d5, .day.d6, .day.d7 { gap: 4px; }
.event { grid-area: 2 / 1 / 3 / 6; margin: 0 10px; border: 1px solid #86abbd; background: linear-gradient(90deg, #fff 5px, #86abbd 5px 6px, #0000 6px), linear-gradient(#d7e6ee, #abc8d6); color: #000; }
.scroll { display: flex; flex-direction: column; justify-content: space-between; align-items: center; border-left: 1px solid #86abbd; background: #f8f8f9; }
.sb { width: 19px; height: 21px; border: 1px solid #b3b5ba; border-radius: 2px; background: linear-gradient(90deg, #fff, #e6e7e9); color: #3c4668; }
.sb-dim { color: #989ec0; }
.up::before { content: ""; display: block; margin: 0 auto; width: 0; border: 5px solid transparent; border-top: 0; border-bottom: 6px solid; }
.down::before { content: ""; display: block; margin: 0 auto; width: 0; border: 5px solid transparent; border-bottom: 0; border-top: 6px solid; }
.grid { display: grid; grid-template-columns: 63px repeat(7, minmax(0, 1fr)) 22px; flex: 1; min-height: 0; overflow: hidden; }
.hours { overflow: hidden; min-height: 0; }
.hour { display: flex; justify-content: flex-end; gap: 3px; height: 120px; padding: 3px 7px 0 0; border-bottom: 1px solid #9aa8b4; background: linear-gradient(#a9adb2, #a9adb2) right 4px top 29px / 20px 1px no-repeat, linear-gradient(#a9adb2, #a9adb2) right 4px top 59px / 20px 1px no-repeat, linear-gradient(#a9adb2, #a9adb2) right 4px top 89px / 20px 1px no-repeat; font-size: 20px; line-height: 30px; }
.hour sup { font-size: 12px; line-height: 18px; }
.col { border-left: 1px solid #86abbd; background: linear-gradient(#0000 119px, #86abbd 119px) 0 0 / 100% 120px, linear-gradient(#0000 29px, #e0e9ed 29px) 0 0 / 100% 30px; }
.col-off { background-color: #e6eef2; }
.picked { height: 29px; margin-top: 60px; background: #375460; }
.thumb { display: flex; flex-direction: column; justify-content: center; align-items: center; width: 19px; height: 93px; margin: auto 0 260px; border: 1px solid #b3b5ba; border-radius: 2px; background: linear-gradient(90deg, #fff, #e6e7e9); }
.thumb i { width: 8px; height: 9px; background: repeating-linear-gradient(#777 0 1px, #0000 1px 3px); }

/* to-do bar */
.todo { display: flex; flex-direction: column; width: 389px; padding: 11px 4px 7px 10px; }
.expand { margin-left: 6px; }
.months { display: flex; gap: 6px; height: 167px; padding-top: 2px; }
.mini { align-self: flex-start; border-spacing: 0; table-layout: fixed; width: 181px; }
.mini caption { position: relative; padding-left: 26px; line-height: 21px; height: 21px; }
.mini#m2 caption { padding-left: 12px; }
.mini .tri { position: absolute; top: 5px; margin: 0; }
.mini .tri-l { left: 24px; } .mini .tri-r { right: 3px; }
.mini th, .mini td { width: 23px; height: 20px; padding: 0 4px 0 0; text-align: right; font-weight: 400; line-height: 20px; }
.mini thead th { height: 22px; line-height: 22px; border-bottom: 1px solid #dde1e7; }
.mini th:first-child { width: 20px; padding-right: 3px; border-bottom: 0; font-size: 9px; }
.mini .out { color: #a5aab2; }
.wk-on td { background: #cbd1d9; }
.taskpane { display: flex; flex: 1; min-height: 0; }
.tasks { flex: 1; min-width: 0; }
.taskscroll { display: flex; flex-direction: column; justify-content: space-between; width: 21px; padding: 8px 0 6px; background: #dce0e9; border: 1px solid #cdd1da; border-width: 1px 0; color: #8b8f97; }
.list { width: 100%; table-layout: fixed; border-spacing: 0; }
.c13 { width: 13px; } .c21 { width: 21px; } .c22 { width: 22px; } .c24 { width: 24px; } .c25 { width: 25px; } .c29 { width: 29px; } .c36 { width: 36px; }
.list th { height: 26px; padding: 0 0 0 1px; border-bottom: 1px solid #a2a7af; background: linear-gradient(#a2a7af, #a2a7af) right 4px / 1px 19px no-repeat; font-weight: 400; text-align: center; white-space: nowrap; }
.list th:last-child { background: none; }
.list th svg { margin: 0 auto; }
.list .tl { padding-left: 4px; text-align: left; }
.asc { margin: 0 0 6px 22px; border: 5px solid transparent; border-top: 0; border-bottom-color: #a2a7af; }
.new td { height: 29px; padding: 0 0 5px 2px; border-bottom: 1px solid #b9bec6; background: linear-gradient(#e6e9ee 0 23px, #d9dde7 23px); color: #000; }
.cat { display: flex; align-items: center; height: 32px; padding: 7px 0 0 15px; border-bottom: 1px dashed #8b8f97; }
.fold { width: 6px; height: 8px; margin-right: 12px; background: #777; clip-path: polygon(0 0, 100% 50%, 0 100%, 0 0, 1px 2px, 1px 6px, 4px 4px, 1px 2px); }
.fold-open { background: #222; clip-path: polygon(100% 10%, 100% 90%, 0 90%); }
.sw { width: 10px; height: 15px; border: 1px solid; }
.cat .sw { margin: -4px 11px 0 0; }
.sw-orange { background: #ffcb9c; border-color: #c07434; }
.sw-red { background: #d8222f; border-color: #8c141c; }
.sw-green { background: #43a336; border-color: #2b7220; }
.sw-yellow { background: #fffb98; border-color: #a09a36; }
.sw-blue { background: #3465b8; border-color: #1e3f7c; }
.item { display: flex; align-items: center; height: 21px; padding-left: 4px; white-space: nowrap; }
.tick { appearance: none; width: 10px; height: 10px; margin: 2px 12px 0 0; border: 1px solid #6c7fae; background: #fff; }
.subject { flex: 1; margin-left: 22px; }
.cf { width: 22px; } .cg { width: 35px; } .cr { width: 30px; }
.flag { margin: 0 7px 0 13px; }

/* status bar */
.status { display: flex; align-items: center; flex: none; height: 28px; padding-right: 4px; border-top: 2px solid #9094a0; background: linear-gradient(#e3e5e9, #cdd0d5 50%, #bbbec4); }
.count { align-self: stretch; width: 87px; padding: 3px 0 0 8px; border-right: 1px solid #90949b; }
.sync { margin-left: auto; }
.conn { display: flex; align-items: center; gap: 4px; margin-left: 15px; padding-right: 16px; }
.views { display: flex; align-self: stretch; align-items: center; padding-left: 5px; border-left: 1px solid #90949b; }
.vb { display: flex; align-items: center; justify-content: center; width: 22px; height: 24px; }
.vb-on { width: 25px; margin-left: 1px; border: 1px solid #c29a2c; border-radius: 2px; background: linear-gradient(#fbd566, #fff096); }
.pct { width: 33px; margin: 0 7px 0 9px; }
.zoombtn { display: grid; place-items: center; width: 20px; height: 20px; border: 1px solid #666; border-radius: 50%; background: linear-gradient(#fff, #d9dbdf); }
.zoom { appearance: none; width: 125px; height: 20px; margin: 0; background: linear-gradient(#999, #999) center / 100% 1px no-repeat, linear-gradient(#999, #999) 50% 50% / 1px 9px no-repeat; }
.zoom::-webkit-slider-thumb { appearance: none; width: 11px; height: 16px; background: linear-gradient(#fff, #c9ccd2); border: 1px solid #555; border-radius: 1px 1px 6px 6px; }
```
